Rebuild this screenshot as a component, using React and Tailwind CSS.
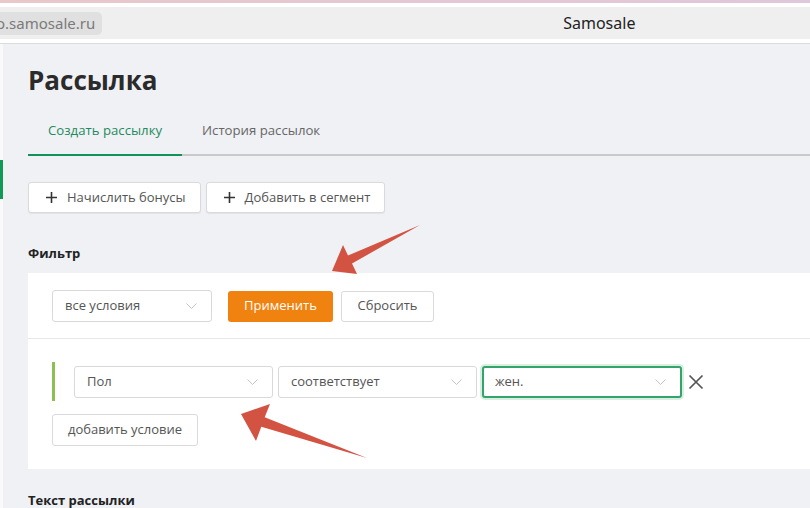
import React from 'react';

const Chevron = ({ className = '' }) => (
  <svg width="11" height="6" viewBox="0 0 11 6" className={className} fill="none">
    <path d="M0.5 0.5 L5.5 5.5 L10.5 0.5" stroke="#c4c4c4" strokeWidth="1" />
  </svg>
);

const Plus = () => (
  <svg width="11" height="11" viewBox="0 0 11 11" fill="none">
    <path d="M5.5 0 V11 M0 5.5 H11" stroke="#333" strokeWidth="1.6" />
  </svg>
);

const Select = ({ value, width, active = false, chevronRight = 14 }) => (
  <div
    className={
      active
        ? 'h-[32px] flex items-center justify-between pl-[11px] rounded-[3px] border-2 border-[#34a46a] shadow-[0_0_0_2px_#d7efe1] bg-white'
        : 'h-[32px] flex items-center justify-between pl-[12px] rounded-[3px] border border-[#d9d9d9] bg-white'
    }
    style={{ width, paddingRight: chevronRight }}
  >
    <span className="text-[13px] text-[#555]">{value}</span>
    <Chevron />
  </div>
);

export default function App() {
  return (
    <div className="relative w-[810px] h-[508px] overflow-hidden bg-[#f0f1f5] font-['Open_Sans',sans-serif]">
      {/* browser chrome */}
      <div className="h-[3px] bg-gradient-to-r from-[#e9c8cb] to-[#e1c7db]" />
      <div className="h-[4px] bg-white" />
      <div className="h-[32px] bg-[#efefef] flex items-center">
        <div className="h-[23px] ml-[-14px] pl-[10px] pr-[7px] flex items-center rounded-[5px] bg-[#e0e0e0] text-[15px] text-[#7a7a7a] font-['Noto_Sans',sans-serif]">
          o.samosale.ru
        </div>
        <div className="ml-[461px] text-[16px] text-[#222] font-['Noto_Sans',sans-serif]">Samosale</div>
      </div>
      <div className="h-[4px] bg-white" />
      <div className="h-[1px] bg-[#dcdcdc]" />

      <div className="flex">
        {/* left edge */}
        <div className="w-[3px] shrink-0 bg-[#f9f9f9] h-[464px]">
          <div className="mt-[116px] h-[39px] bg-[#0f9a56]" />
        </div>

        <div className="flex-1 pl-[25px]">
          <h1 className="mt-[18px] text-[26px] leading-[36px] font-bold text-[#2b2b2b]">Рассылка</h1>

          {/* tabs */}
          <div className="mt-[10px] flex border-b-2 border-[#c9c9c9]">
            <div className="h-[48px] px-[20px] flex items-center border-b-2 border-[#14915a] -mb-[2px] text-[13.2px] text-[#1f8a5d]">
              Создать рассылку
            </div>
            <div className="h-[46px] px-[20px] flex items-center text-[13.2px] text-[#666]">История рассылок</div>
          </div>

          {/* action buttons */}
          <div className="mt-[26px] flex gap-[5px]">
            <button className="h-[31px] pl-[17px] pr-[14px] flex items-center gap-[10px] bg-white border border-[#dadada] rounded-[3px] shadow-[0_1px_1px_rgba(0,0,0,0.06)] text-[13px] text-[#555]">
              <Plus />
              Начислить бонусы
            </button>
            <button className="h-[31px] pl-[17px] pr-[14px] flex items-center gap-[10px] bg-white border border-[#dadada] rounded-[3px] shadow-[0_1px_1px_rgba(0,0,0,0.06)] text-[13px] text-[#555]">
              <Plus />
              Добавить в сегмент
            </button>
          </div>

          <div className="mt-[31px] h-[18px] leading-[18px] text-[13px] font-bold text-[#222]">Фильтр</div>

          {/* filter panel */}
          <div className="mt-[11px] w-[820px] bg-white">
            <div className="pl-[24px] pt-[17px] pb-[16px] flex items-center border-b border-[#e7e7e7]">
              <Select value="все условия" width={160} chevronRight={14} />
              <button className="ml-[16px] h-[31px] w-[105px] rounded-[3px] bg-[#f0820f] text-white text-[13px]">
                Применить
              </button>
              <button className="ml-[8px] h-[31px] w-[93px] rounded-[3px] bg-white border border-[#dadada] text-[#555] text-[13px]">
                Сбросить
              </button>
            </div>

            <div className="pl-[24px] pt-[23px] pb-[23px]">
              <div className="h-[39px] border-l-[3px] border-[#8cc152] pl-[19px] pt-[4px] flex items-start gap-[5px]">
                <Select value="Пол" width={199} />
                <Select value="соответствует" width={199} />
                <Select value="жен." width={200} active />
                <svg width="16" height="16" viewBox="0 0 16 16" className="ml-[1px] mt-[8px]" fill="none">
                  <path d="M1.5 1.5 L14.5 14.5 M14.5 1.5 L1.5 14.5" stroke="#555" strokeWidth="1.7" />
                </svg>
              </div>
              <button className="mt-[13px] h-[32px] w-[146px] rounded-[3px] bg-white border border-[#dadada] text-[13px] text-[#555]">
                добавить условие
              </button>
            </div>
          </div>

          <div className="mt-[22px] text-[13px] leading-[18px] font-bold text-[#222]">Текст рассылки</div>
        </div>
      </div>

      {/* annotation arrows */}
      <svg className="absolute inset-0 pointer-events-none" width="810" height="508" viewBox="0 0 810 508">
        <polygon points="420,225 352,263.5 357,274 332,271 343,245 348,255.5" fill="#d35343" />
        <polygon points="367,458 264.7,417.3 270,404 241,414 256,441 261.3,426.7" fill="#d35343" />
      </svg>
    </div>
  );
}
